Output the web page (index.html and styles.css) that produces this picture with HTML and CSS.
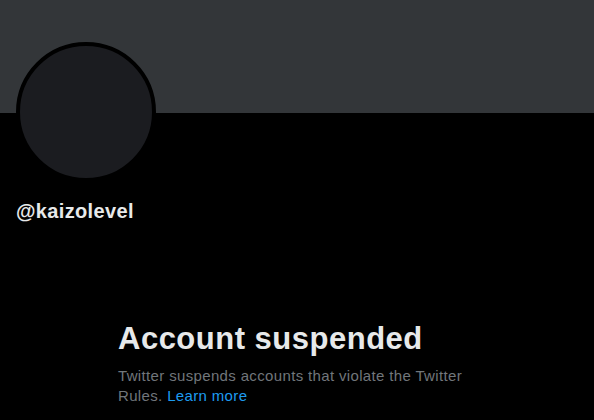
FILE: index.html
```html
<!DOCTYPE html>
<html lang="en">
<head>
<meta charset="utf-8">
<title>@kaizolevel</title>
<link rel="stylesheet" href="styles.css">
</head>
<body>
<div class="page">
  <div class="banner"></div>
  <div class="profile">
    <div class="avatar"></div>
    <div class="handle">@kaizolevel</div>
  </div>
  <div class="empty">
    <h1 class="title">Account suspended</h1>
    <p class="desc">Twitter suspends accounts that violate the Twitter Rules. <a class="link" href="#">Learn more</a></p>
  </div>
</div>
</body>
</html>
```
FILE: styles.css
```css
html, body {
  margin: 0;
  padding: 0;
  background: #000;
}
body {
  font-family: "Liberation Sans", Arial, sans-serif;
  color: #e7e9ea;
}
.page {
  width: 594px;
  height: 420px;
  overflow: hidden;
}
.banner {
  height: 113px;
  background: #333639;
}
.profile {
  padding: 0 16px;
}
.avatar {
  width: 132px;
  height: 132px;
  margin-top: -71px;
  border: 4px solid #000;
  border-radius: 50%;
  background: #1b1c20;
}
.handle {
  margin-top: 17px;
  font-size: 20px;
  line-height: 24px;
  font-weight: 800;
  letter-spacing: 0.35px;
  color: #e7e9ea;
}
.empty {
  width: 360px;
  margin: 98px auto 0 118px;
}
.title {
  margin: 0;
  font-size: 31px;
  line-height: 36px;
  font-weight: 800;
  letter-spacing: 0.5px;
  color: #e7e9ea;
}
.desc {
  margin: 9px 0 0;
  font-size: 15px;
  line-height: 20px;
  letter-spacing: 0.35px;
  color: #71767b;
}
.link {
  color: #1d9bf0;
  text-decoration: none;
}
```
